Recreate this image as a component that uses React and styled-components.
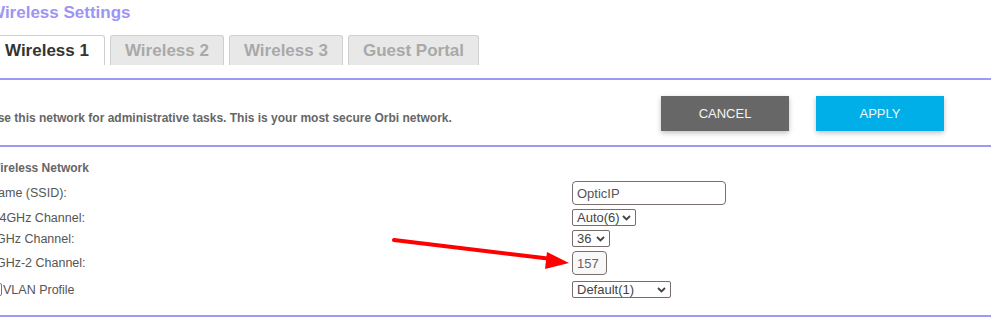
import React from "react";
import styled, { createGlobalStyle } from "styled-components";

const GlobalStyle = createGlobalStyle`
  html, body {
    margin: 0;
    padding: 0;
    background: #fff;
    overflow: hidden;
  }
  body {
    font-family: "Liberation Sans", Arial, sans-serif;
  }
`;

const Root = styled.div`
  position: relative;
  width: 991px;
  height: 331px;
  overflow: hidden;
`;

const Page = styled.div`
  margin-left: -11px;
  width: calc(100% + 11px);
`;

const Title = styled.h1`
  margin: 0;
  padding-top: 3px;
  font-size: 17px;
  line-height: 20px;
  font-weight: 700;
  color: #9c95f6;
  margin-bottom: 12px;
`;

const TabBar = styled.div`
  display: flex;
  gap: 5px;
  height: 30px;
  margin-bottom: 13px;
`;

const Tab = styled.div`
  display: flex;
  align-items: center;
  box-sizing: border-box;
  height: 30px;
  padding: 0 ${(p) => (p.$active ? "15px" : "14px")};
  border: 1px solid #cfcfcf;
  border-bottom: none;
  border-radius: 3px 3px 0 0;
  background: ${(p) => (p.$active ? "#fff" : "#e8e8e8")};
  color: ${(p) => (p.$active ? "#333" : "#a9a9a9")};
  font-size: 17px;
  font-weight: 700;
`;

const Divider = styled.div`
  height: 2px;
  background: #9d99f6;
`;

const ActionBar = styled.div`
  display: flex;
  align-items: flex-start;
  box-sizing: border-box;
  height: 65px;
  padding-top: 16px;
  padding-right: 47px;
`;

const Description = styled.p`
  margin: 15px 0 0 0;
  font-size: 12px;
  line-height: 14px;
  font-weight: 700;
  color: #666;
`;

const Buttons = styled.div`
  display: flex;
  gap: 27px;
  margin-left: auto;
`;

const Button = styled.button`
  width: 128px;
  height: 35px;
  border: none;
  border-radius: 0;
  background: ${(p) => (p.$primary ? "#00aee8" : "#676767")};
  color: #f4f4f4;
  font-family: "Liberation Sans", Arial, sans-serif;
  font-size: 13px;
  text-transform: uppercase;
  box-shadow: 0 2px 5px rgba(0, 0, 0, 0.25);
  cursor: pointer;
`;

const Section = styled.div`
  padding-top: 14px;
  padding-bottom: 17px;
`;

const SectionTitle = styled.h2`
  margin: 0 0 6px 0;
  font-size: 12px;
  line-height: 14px;
  font-weight: 700;
  color: #666;
`;

const Rows = styled.div`
  display: flex;
  flex-direction: column;
`;

const Row = styled.div`
  display: flex;
  align-items: center;
  height: ${(p) => p.$h}px;
  margin-top: ${(p) => p.$gap || 0}px;
`;

const Label = styled.div`
  display: flex;
  align-items: center;
  width: 583px;
  font-size: 12.5px;
  color: #555;
`;

const Check = styled.span`
  display: inline-block;
  box-sizing: border-box;
  width: 13px;
  height: 13px;
  border: 1px solid #777;
  border-radius: 2px;
  margin-right: 1px;
`;

const TextBox = styled.div`
  display: flex;
  align-items: center;
  box-sizing: border-box;
  width: ${(p) => p.$w}px;
  height: 24px;
  padding-left: 4px;
  border: 1px solid #7a6e6e;
  border-radius: 4px;
  background: ${(p) => (p.$disabled ? "#f8f8f8" : "#fff")};
  color: ${(p) => (p.$disabled ? "#666" : "#555")};
  font-size: 13px;
`;

const SelectBox = styled.div`
  display: flex;
  align-items: center;
  justify-content: space-between;
  box-sizing: border-box;
  width: ${(p) => p.$w}px;
  height: 17px;
  padding: 0 4px 0 4px;
  border: 1px solid #776b6b;
  border-radius: 2px;
  color: #444;
  font-size: 13px;
`;

const Annotation = styled.svg`
  position: absolute;
  left: 0;
  top: 0;
  pointer-events: none;
`;

function Chevron() {
  return (
    <svg width="9" height="6" viewBox="0 0 9 6">
      <path d="M1 1 L4.5 4.5 L8 1" fill="none" stroke="#444" strokeWidth="1.8" />
    </svg>
  );
}

function Select({ value, width }) {
  return (
    <SelectBox $w={width}>
      <span>{value}</span>
      <Chevron />
    </SelectBox>
  );
}

const tabs = ["Wireless 1", "Wireless 2", "Wireless 3", "Guest Portal"];

export default function App() {
  return (
    <Root>
      <GlobalStyle />
      <Page>
        <Title>Wireless Settings</Title>
        <TabBar>
          {tabs.map((t, i) => (
            <Tab key={t} $active={i === 0}>
              {t}
            </Tab>
          ))}
        </TabBar>
        <Divider />
        <ActionBar>
          <Description>
            Use this network for administrative tasks. This is your most secure Orbi network.
          </Description>
          <Buttons>
            <Button>Cancel</Button>
            <Button $primary>Apply</Button>
          </Buttons>
        </ActionBar>
        <Divider />
        <Section>
          <SectionTitle>Wireless Network</SectionTitle>
          <Rows>
            <Row $h={24}>
              <Label>Name (SSID):</Label>
              <TextBox $w={154}>OpticIP</TextBox>
            </Row>
            <Row $h={17} $gap={4}>
              <Label>2.4GHz Channel:</Label>
              <Select value="Auto(6)" width={64} />
            </Row>
            <Row $h={17} $gap={4}>
              <Label>5GHz Channel:</Label>
              <Select value="36" width={38} />
            </Row>
            <Row $h={24} $gap={4}>
              <Label>5GHz-2 Channel:</Label>
              <TextBox $w={35} $disabled>157</TextBox>
            </Row>
            <Row $h={17} $gap={6}>
              <Label>
                <Check />
                VLAN Profile
              </Label>
              <Select value="Default(1)" width={99} />
            </Row>
          </Rows>
        </Section>
        <Divider />
      </Page>
      <Annotation width="991" height="331" viewBox="0 0 991 331">
        <line x1="394" y1="240" x2="552" y2="259" stroke="#f00" strokeWidth="4" strokeLinecap="round" />
        <polygon points="569,263 547,252 545,269" fill="#f00" />
      </Annotation>
    </Root>
  );
}
